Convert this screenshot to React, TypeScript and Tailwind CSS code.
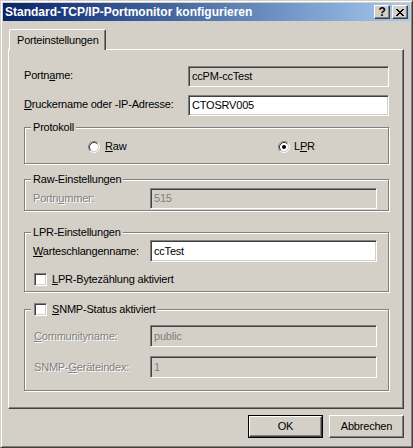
import type { ReactNode } from 'react';

const raised =
  'border border-t-white border-l-white border-b-[#404040] border-r-[#404040] shadow-[inset_-1px_-1px_0_#808080]';
const sunken =
  'border border-t-[#808080] border-l-[#808080] border-b-white border-r-white shadow-[inset_1px_1px_0_#404040,inset_-1px_-1px_0_#D4D0C8]';
const dimText = 'text-[#808080] [text-shadow:1px_1px_0_#fff]';

function Field({ value, tone, className }: { value: string; tone: 'white' | 'readonly' | 'disabled'; className: string }) {
  const bg = tone === 'white' ? 'bg-white text-black' : tone === 'readonly' ? 'bg-[#D4D0C8] text-black' : 'bg-[#D4D0C8] text-[#808080]';
  return <div className={`${sunken} ${bg} ${className} flex items-center pl-[3px]`}>{value}</div>;
}

function Group({ title, className, children }: { title: ReactNode; className: string; children: ReactNode }) {
  return (
    <div className={`relative border border-[#808080] shadow-[1px_1px_0_#fff,inset_1px_1px_0_#fff] ${className}`}>
      <div className="absolute left-[6px] top-[-7px] flex items-center bg-[#D4D0C8] px-[2px]">{title}</div>
      {children}
    </div>
  );
}

function Radio({ checked }: { checked?: boolean }) {
  return (
    <svg width="12" height="12" viewBox="0 0 12 12">
      <circle cx="6" cy="6" r="4.2" fill="#fff" />
      <path d="M 2.11 9.89 A 5.5 5.5 0 0 1 9.89 2.11" stroke="#808080" fill="none" />
      <path d="M 9.89 2.11 A 5.5 5.5 0 0 1 2.11 9.89" stroke="#fff" fill="none" />
      <path d="M 2.82 9.18 A 4.5 4.5 0 0 1 9.18 2.82" stroke="#404040" fill="none" />
      <path d="M 9.18 2.82 A 4.5 4.5 0 0 1 2.82 9.18" stroke="#D4D0C8" fill="none" />
      {checked && <circle cx="6" cy="6" r="2" fill="#000" />}
    </svg>
  );
}

function Check() {
  return <div className={`${sunken} h-[13px] w-[13px] bg-white`} />;
}

function CloseGlyph() {
  return (
    <svg width="8" height="7" viewBox="0 0 8 7" shapeRendering="crispEdges">
      <path d="M0 0h2v1H0zM6 0h2v1H6zM1 1h2v1H1zM5 1h2v1H5zM2 2h4v1H2zM3 3h2v1H3zM2 4h4v1H2zM1 5h2v1H1zM5 5h2v1H5zM0 6h2v1H0zM6 6h2v1H6z" fill="#000" />
    </svg>
  );
}

export default function App() {
  return (
    <div className="h-[448px] w-[413px] border border-t-[#D4D0C8] border-l-[#D4D0C8] border-b-[#404040] border-r-[#404040] bg-[#D4D0C8] p-[2px] font-[family-name:'Liberation_Sans',Arial,sans-serif] text-[11px] leading-[13px] tracking-[-0.2px] text-black shadow-[inset_1px_1px_0_#fff,inset_-1px_-1px_0_#808080]">
      <div className="flex h-[18px] items-center bg-linear-to-r from-[#0A246A] to-[#A6CAF0] pl-[2px] pr-[2px]">
        <div className="flex-1 text-[12px] font-bold tracking-normal text-white">Standard-TCP/IP-Portmonitor konfigurieren</div>
        <div className="flex gap-[2px]">
          <div className={`${raised} flex h-[14px] w-[16px] items-center justify-center bg-[#D4D0C8] text-[12px] font-bold leading-[12px]`}>?</div>
          <div className={`${raised} flex h-[14px] w-[16px] items-center justify-center bg-[#D4D0C8]`}>
            <CloseGlyph />
          </div>
        </div>
      </div>

      <div className="pl-[5px] pt-[8px]">
        <div className="relative z-10 -mb-px ml-px flex h-[21px] w-[97px] items-center rounded-t-[2px] border border-b-0 border-t-white border-l-white border-r-[#404040] bg-[#D4D0C8] pl-[7px] shadow-[inset_-1px_0_0_#808080]">
          Porteinstellungen
        </div>
        <div className="h-[360px] w-[396px] border border-t-white border-l-white border-b-[#404040] border-r-[#404040] pl-[15px] pt-[16px] shadow-[inset_-1px_-1px_0_#808080]">
          <div className="flex items-start">
            <div className="mt-[3px] w-[164px]">
              Portn<u>a</u>me:
            </div>
            <Field value="ccPM-ccTest" tone="readonly" className="h-[21px] w-[201px]" />
          </div>
          <div className="mt-[8px] flex items-start">
            <div className="mt-[3px] w-[164px]">
              <u>D</u>ruckername oder -IP-Adresse:
            </div>
            <Field value="CTOSRV005" tone="white" className="h-[21px] w-[201px]" />
          </div>

          <Group title="Protokoll" className="mt-[11px] h-[37px] w-[365px]">
            <div className="flex pl-[63px] pt-[12px]">
              <div className="flex w-[190px] items-center gap-[5px]">
                <Radio />
                <span>
                  <u>R</u>aw
                </span>
              </div>
              <div className="flex items-center gap-[4px]">
                <Radio checked />
                <span>
                  L<u>P</u>R
                </span>
              </div>
            </div>
          </Group>

          <Group title="Raw-Einstellungen" className="mt-[15px] h-[32px] w-[365px]">
            <div className="flex items-center pl-[8px] pt-[8px]">
              <div className={`w-[117px] ${dimText}`}>
                Portn<u>u</u>mmer:
              </div>
              <Field value="515" tone="disabled" className="h-[21px] w-[227px]" />
            </div>
          </Group>

          <Group title="LPR-Einstellungen" className="mt-[21px] h-[60px] w-[365px]">
            <div className="flex items-center pl-[8px] pt-[7px]">
              <div className="w-[117px]">
                <u>W</u>arteschlangenname:
              </div>
              <Field value="ccTest" tone="white" className="h-[22px] w-[227px]" />
            </div>
            <div className="mt-[11px] flex items-center gap-[5px] pl-[9px]">
              <Check />
              <span>
                <u>L</u>PR-Bytezählung aktiviert
              </span>
            </div>
          </Group>

          <Group
            title={
              <span className="flex items-center gap-[5px] pl-px">
                <Check />
                <span>
                  <u>S</u>NMP-Status aktiviert
                </span>
              </span>
            }
            className="mt-[17px] h-[82px] w-[365px]"
          >
            <div className="flex items-center pl-[9px] pt-[15px]">
              <div className={`w-[116px] ${dimText}`}>
                <u>C</u>ommunityname:
              </div>
              <Field value="public" tone="disabled" className="h-[22px] w-[227px]" />
            </div>
            <div className="mt-[9px] flex items-center pl-[9px]">
              <div className={`w-[116px] ${dimText}`}>
                SNMP-<u>G</u>eräteindex:
              </div>
              <Field value="1" tone="disabled" className="h-[22px] w-[227px]" />
            </div>
          </Group>
        </div>
      </div>

      <div className="mt-[6px] flex gap-[6px] pl-[245px]">
        <div className="flex h-[23px] w-[75px] items-center justify-center border border-black">
          <div className={`${raised} flex h-full w-full items-center justify-center`}>OK</div>
        </div>
        <div className={`${raised} flex h-[23px] w-[75px] items-center justify-center`}>Abbrechen</div>
      </div>
    </div>
  );
}
